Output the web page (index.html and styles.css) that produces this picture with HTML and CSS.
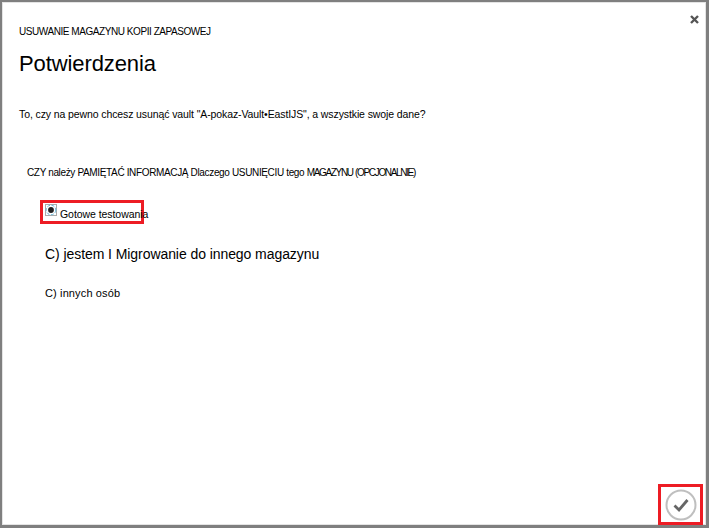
FILE: index.html
```html
<!DOCTYPE html>
<html lang="pl">
<head>
<meta charset="utf-8">
<title>Potwierdzenia</title>
<link rel="stylesheet" href="styles.css">
</head>
<body>
<main class="dialog">
  <button class="close" aria-label="Zamknij"><svg width="9" height="9" viewBox="0 0 9 9"><path d="M1 1 8 8M8 1 1 8"/></svg></button>
  <header>
    <p class="eyebrow"><span>USUWANIE MAGAZYNU KOPII ZAPASOWEJ</span></p>
    <h1><span>Potwierdzenia</span></h1>
  </header>
  <p class="question"><span>To, czy na pewno chcesz usunąć vault "A-pokaz-Vault•EastIJS", a wszystkie swoje dane?</span></p>
  <section class="reasons">
    <h2>CZY należy PAMIĘTAĆ INFORMACJĄ Dlaczego USUNIĘCIU tego <span class="tight">MAGAZYNU (OPCJONALNIE)</span></h2>
    <div class="option selected">
      <svg class="radio" width="12" height="12" viewBox="0 0 12 12"><rect class="focus" x=".5" y=".5" width="11" height="11"/><circle class="ring" cx="6" cy="6" r="4.8"/><circle class="dot" cx="6" cy="6" r="2.9"/></svg>
      <span>Gotowe testowania</span>
    </div>
    <p class="option large"><span>C) jestem I Migrowanie do innego magazynu</span></p>
    <p class="option other"><span>C) innych osób</span></p>
  </section>
  <button class="confirm" aria-label="Potwierdź"><svg width="32" height="32" viewBox="0 0 32 32"><circle cx="16" cy="16" r="14.5"/><path d="M9.5 16.5 14 21 22.5 11"/></svg></button>
</main>
</body>
</html>
```
FILE: styles.css
```css
* { box-sizing: border-box; }
body { margin: 0; font-family: "Liberation Sans", Arial, sans-serif; color: #000; }
p, h1, h2 { margin: 0; font-weight: 400; white-space: nowrap; }
button { padding: 0; background: none; border: 0; }
svg { display: block; fill: none; }
.dialog {
  position: relative;
  height: 528px;
  padding: 20px 17px;
  background: #fff;
  border: solid #7f7f7f;
  border-width: 2px 3px 3px 2px;
  box-shadow: inset 0 0 0 1px #e4e4e4;
  overflow: hidden;
}
.close { position: absolute; top: 13px; right: 7px; }
.close path { stroke: #555; stroke-width: 2.4; }
.eyebrow { font-size: 10px; line-height: 20px; letter-spacing: -.44px; }
h1 { margin-top: 7px; font-size: 22px; line-height: 30px; letter-spacing: -.1px; }
.question { margin-top: 25px; font-size: 10.5px; line-height: 20px; letter-spacing: -.105px; }
.reasons { margin-top: 39px; padding-left: 8px; }
h2 { font-size: 10px; line-height: 20px; letter-spacing: -.35px; }
.tight { letter-spacing: -1.34px; word-spacing: 1px; }
.option { margin-left: 18px; }
.selected {
  display: flex;
  width: 104px;
  height: 24px;
  margin: 17px 0 0 13px;
  padding-left: 2px;
  border: 3px solid #ed1c24;
  font-size: 10.5px;
  line-height: 22px;
  letter-spacing: -.06px;
  white-space: nowrap;
}
.selected span { margin-left: 3px; }
.radio { flex: none; margin-top: 1px; }
.focus { stroke: #555; stroke-dasharray: 1 1; }
.ring { fill: #fff; stroke: #62b5d9; stroke-dasharray: 3 1.5; }
.dot { fill: #222; }
.large { margin-top: 20px; font-size: 14px; line-height: 20px; letter-spacing: -.07px; }
.other { margin-top: 19px; font-size: 11px; line-height: 20px; letter-spacing: .13px; }
.confirm {
  position: absolute;
  right: 3px;
  bottom: 0;
  width: 45px;
  height: 41px;
  padding-left: 4px;
  border: 3px solid #ed1c24;
}
.confirm circle { stroke: #bfbfbf; stroke-width: 2; }
.confirm path { stroke: #666; stroke-width: 2.8; }
```
